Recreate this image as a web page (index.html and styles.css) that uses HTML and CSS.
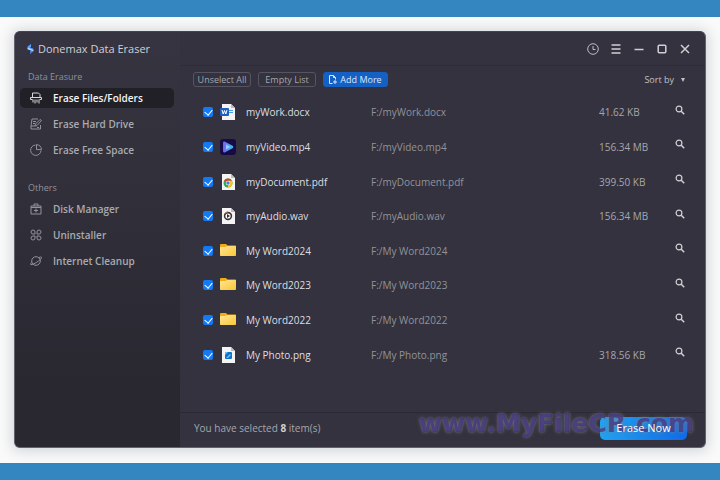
FILE: index.html
```html
<!DOCTYPE html>
<html lang="en">
<head>
<meta charset="utf-8">
<title>Donemax Data Eraser</title>
<link rel="stylesheet" href="styles.css">
</head>
<body>
<svg class="defs" aria-hidden="true">
  <defs>
    <linearGradient id="gold" x1="0" y1="0" x2="1" y2="1"><stop offset="0" stop-color="#ffe59a"/><stop offset="1" stop-color="#fbc630"/></linearGradient>
    <linearGradient id="play" x1="0" y1="0" x2="1" y2="0"><stop offset="0" stop-color="#7a5cf0"/><stop offset="1" stop-color="#35c3e8"/></linearGradient>
    <symbol id="folder" viewBox="0 0 16 16"><path fill="#f0ae12" d="M0 2.200C0 1.500.5 1 1.200 1H6l1.500 1.500H15c.6 0 1 .4 1 1V7H0z"/><path fill="url(#gold)" d="M0 4.800C0 4.300.3 4 .8 4H5.500L7 3h8c.6 0 1 .4 1 1v8c0 .6-.4 1-1 1H1c-.6 0-1-.4-1-1z"/></symbol>
    <symbol id="search" viewBox="0 0 10 10"><circle cx="4" cy="4" r="2.900" fill="none" stroke="currentColor" stroke-width="1.200"/><path d="M6.200 6.200 9.200 9.200" stroke="currentColor" stroke-width="1.500"/></symbol>
    <symbol id="page" viewBox="0 0 16 16"><path fill="#f4f4f4" d="M2 0h9l4 4v12H2z"/><path fill="#bcbcbc" d="M11 0l4 4h-4z"/></symbol>
  </defs>
</svg>
<div class="window">
  <aside class="sidebar">
    <h1 class="brand">
      <svg width="7" height="10" viewBox="0 0 7 10" aria-hidden="true"><path fill="#5a9dfb" d="M4 0 .6 2.600v2.600L4 6.500 3 7.500V10l3.400-2.800V4.800L3 3.500l1-.8z"/><path fill="#a9d3ff" d="M.6 3.500 6.400 6v1.200L.6 5.200z"/><path fill="#2f6df0" d="M3 7.800v2.200l3.400-2.800z"/></svg>
      Donemax Data Eraser
    </h1>
    <nav>
      <h2>Data Erasure</h2>
      <a class="item active" href="#files"><svg viewBox="0 0 12 12"><path d="M2.500 5V1h6l1.500 1.500V5M.5 7.500V5.500h11v2H9.500M.5 7.500h2M3 7.500v3M5 7.500v4M7 7.500v3M9 7.500v4"/></svg>Erase Files/Folders</a>
      <a class="item" href="#drive"><svg viewBox="0 0 12 12"><path d="M8 1H2L1 8v3h9.500V7M1 8h4M10 1.500l1.500 1L7 7.500l-2 .5.500-2zM3 3.500h3M3 5.500h2M7 9.500h2"/></svg>Erase Hard Drive</a>
      <a class="item" href="#space"><svg viewBox="0 0 12 12"><path d="M5.500 1A5.200 5.200 0 1 0 11 6.500M6.500 .6v5h5A5 5 0 0 0 6.500 .6z"/></svg>Erase Free Space</a>
      <h2 class="second">Others</h2>
      <a class="item" href="#disk"><svg viewBox="0 0 12 12"><path d="M1 3h10v8H1zM4 3V1h4v2M1 4.500h10M6 5.500v4M4 7.500h4"/></svg>Disk Manager</a>
      <a class="item" href="#uninstall"><svg viewBox="0 0 12 12"><path d="M5 5H3a2 2 0 1 1 2-2zM7 5V3a2 2 0 1 1 2 2zM5 9a2 2 0 1 1-2-2h2zM7 7h2a2 2 0 1 1-2 2z"/></svg>Uninstaller</a>
      <a class="item" href="#internet"><svg viewBox="0 0 12 12"><circle cx="6" cy="6" r="4.300"/><path d="M9 2.500c2-.8 3-.6 2.500.5C10.500 5.200 3.500 9.800 1 9.700.2 9.600.5 8.500 1.700 7.300"/></svg>Internet Cleanup</a>
    </nav>
  </aside>
  <main class="main">
    <header class="titlebar">
      <button type="button" aria-label="History"><svg viewBox="0 0 12 12"><circle cx="6" cy="6" r="5.300"/><path d="M6 3v3.500h2.500"/></svg></button>
      <button type="button" aria-label="Menu"><svg class="bold" viewBox="0 0 12 12"><path d="M1.500 2h9M1.500 6h9M1.500 10h9"/></svg></button>
      <button type="button" aria-label="Minimize"><svg class="bold" viewBox="0 0 12 12"><path d="M1.500 6.500h9"/></svg></button>
      <button type="button" aria-label="Maximize"><svg class="bold" viewBox="0 0 12 12"><rect x="2.200" y="2.200" width="7.600" height="7.600" rx="1"/></svg></button>
      <button type="button" aria-label="Close"><svg class="bold" viewBox="0 0 12 12"><path d="M2 2l8 8M10 2 2 10"/></svg></button>
    </header>
    <div class="toolbar">
      <button type="button">Unselect All</button>
      <button type="button">Empty List</button>
      <button type="button" class="add"><svg width="8" height="9" viewBox="0 0 8 9" aria-hidden="true"><path fill="none" stroke="currentColor" d="M3.500 8.500h-3v-8h4l2 2v2M4.500 .5v2h2M6 5v4M4 7h4"/></svg>Add More</button>
      <button type="button" class="sort">Sort by <span class="caret"></span></button>
    </div>
    <table class="files">
      <tbody>
        <tr><td class="check"><input type="checkbox" aria-label="myWork.docx" checked></td><td class="icon"><svg viewBox="0 0 16 16"><use href="#page"/><path stroke="#4a9be8" d="M9 6.500h4M9 8.500h4"/><rect y="4" width="9" height="8" rx="1" fill="#1f5fc0"/><path d="M2 6l1.200 4L4.500 6.500 5.800 10 7 6" fill="none" stroke="#fff"/></svg></td><td class="name">myWork.docx</td><td class="path">F:/myWork.docx</td><td class="size">41.62 KB</td><td class="find"><button type="button" aria-label="Locate"><svg><use href="#search"/></svg></button></td></tr>
        <tr><td class="check"><input type="checkbox" aria-label="myVideo.mp4" checked></td><td class="icon"><svg viewBox="0 0 16 16"><rect width="16" height="16" rx="3" fill="#160b46"/><path fill="url(#play)" d="M3 4c0-1.200 1-1.700 2-1.200l7.500 4c1 .6 1 1.800 0 2.400l-7.500 4c-1 .5-2 0-2-1.200z"/><path fill="#8fd0ff" d="M6 5.500 10.500 8 6 10.500z"/></svg></td><td class="name">myVideo.mp4</td><td class="path">F:/myVideo.mp4</td><td class="size">156.34 MB</td><td class="find"><button type="button" aria-label="Locate"><svg><use href="#search"/></svg></button></td></tr>
        <tr><td class="check"><input type="checkbox" aria-label="myDocument.pdf" checked></td><td class="icon"><svg viewBox="0 0 16 16"><use href="#page"/><circle cx="8" cy="9" r="4.500" fill="#2da94f"/><path fill="#e33b2e" d="M8 9 4.100 6.700A4.500 4.500 0 0 1 12 6.800H8z"/><path fill="#fcc31e" d="M8 9V6.800h4A4.500 4.500 0 0 1 8 13.500z"/><circle cx="8" cy="9" r="2.200" fill="#fff"/><circle cx="8" cy="9" r="1.700" fill="#3f7fe8"/></svg></td><td class="name">myDocument.pdf</td><td class="path">F:/myDocument.pdf</td><td class="size">399.50 KB</td><td class="find"><button type="button" aria-label="Locate"><svg><use href="#search"/></svg></button></td></tr>
        <tr><td class="check"><input type="checkbox" aria-label="myAudio.wav" checked></td><td class="icon"><svg viewBox="0 0 16 16"><use href="#page"/><circle cx="8" cy="8" r="3.400" fill="#fff" stroke="#40343a" stroke-width="1.600"/><path stroke="#e07a32" fill="none" d="M4.400 6A4.200 4.200 0 0 1 8 3.800"/><path fill="#333" d="M7 6l3 2-3 2z"/></svg></td><td class="name">myAudio.wav</td><td class="path">F:/myAudio.wav</td><td class="size">156.34 MB</td><td class="find"><button type="button" aria-label="Locate"><svg><use href="#search"/></svg></button></td></tr>
        <tr><td class="check"><input type="checkbox" aria-label="My Word2024" checked></td><td class="icon"><svg><use href="#folder"/></svg></td><td class="name">My Word2024</td><td class="path">F:/My Word2024</td><td class="size"></td><td class="find"><button type="button" aria-label="Locate"><svg><use href="#search"/></svg></button></td></tr>
        <tr><td class="check"><input type="checkbox" aria-label="My Word2023" checked></td><td class="icon"><svg><use href="#folder"/></svg></td><td class="name">My Word2023</td><td class="path">F:/My Word2023</td><td class="size"></td><td class="find"><button type="button" aria-label="Locate"><svg><use href="#search"/></svg></button></td></tr>
        <tr><td class="check"><input type="checkbox" aria-label="My Word2022" checked></td><td class="icon"><svg><use href="#folder"/></svg></td><td class="name">My Word2022</td><td class="path">F:/My Word2022</td><td class="size"></td><td class="find"><button type="button" aria-label="Locate"><svg><use href="#search"/></svg></button></td></tr>
        <tr><td class="check"><input type="checkbox" aria-label="My Photo.png" checked></td><td class="icon"><svg viewBox="0 0 16 16"><use href="#page"/><rect x="5" y="5" width="7" height="7" rx="1" fill="#1570c8"/><path fill="#59c8f5" d="M6 11l4-4 1 1-3 3zM5 5h3L5 8z"/></svg></td><td class="name">My Photo.png</td><td class="path">F:/My Photo.png</td><td class="size">318.56 KB</td><td class="find"><button type="button" aria-label="Locate"><svg><use href="#search"/></svg></button></td></tr>
      </tbody>
    </table>
    <footer class="footer">
      <p>You have selected <b>8</b> item(s)</p>
      <button type="button" class="erase"><span>Erase Now</span></button>
      <div class="watermark">www.MyFileCR.com</div>
    </footer>
  </main>
</div>
</body>
</html>
```
FILE: styles.css
```css
* { box-sizing: border-box; }

body {
  margin: 0;
  min-height: 100vh;
  display: flex;
  padding: 14px 14px 15px;
  border: solid #3486c0;
  border-width: 17px 0;
  background: #fafafa;
  font: 11px/16px "Open Sans", "Noto Sans", sans-serif;
  color: #a6a6ad;
}

.defs { position: absolute; width: 0; height: 0; }

button { font: inherit; color: inherit; background: none; border: 0; padding: 0; }

.window {
  flex: 1;
  display: flex;
  border: 1px solid #62616c;
  border-top-color: #44434e;
  border-radius: 6px;
  background: #33323e;
  box-shadow: 0 1px 14px 2px #ced3d8;
}

.sidebar {
  flex: 0 0 165px;
  border-radius: 5px 0 0 5px;
  background: linear-gradient(#353440, #2f2e38 50%, #292831 85%);
}

.brand {
  display: flex;
  align-items: center;
  gap: 4px;
  margin: 0;
  padding: 9px 0 0 12px;
  font-size: 11px;
  font-weight: 400;
  color: #d0d0d4;
  white-space: nowrap;
}

nav { padding: 12px 6px 0 5px; }

nav h2 {
  margin: 0 0 3px 8px;
  font-size: 9px;
  line-height: 16px;
  font-weight: 400;
  color: #92929a;
}

nav h2.second { margin-top: 20px; }

.item {
  display: flex;
  align-items: center;
  gap: 11px;
  height: 20px;
  margin-bottom: 6px;
  padding-left: 10px;
  border-radius: 5px;
  font-size: 10px;
  font-weight: 600;
  color: #aaaab0;
  text-decoration: none;
}

.item svg {
  width: 12px;
  height: 12px;
  fill: none;
  stroke: #92929a;
}

.item.active { background: #212027; color: #f4f4f6; }
.item.active svg { stroke: #d8d8dc; }

.main { flex: 1; display: flex; flex-direction: column; min-width: 0; }

.titlebar {
  display: flex;
  justify-content: flex-end;
  gap: 11px;
  height: 34px;
  padding: 0 14px;
  border-bottom: 1px solid #2d2c37;
}

.titlebar svg {
  display: block;
  width: 12px;
  height: 12px;
  fill: none;
  stroke: #bcbcc2;
}

.titlebar svg.bold { stroke-width: 1.500; stroke: #d0d0d4; }

.toolbar {
  display: flex;
  align-items: center;
  gap: 7px;
  padding: 6px 20px 0 13px;
  font-size: 9px;
}

.toolbar button {
  height: 15px;
  width: 58px;
  border: 1px solid #555460;
  border-radius: 3px;
  line-height: 13px;
  white-space: nowrap;
}

.toolbar .add {
  display: flex;
  align-items: center;
  justify-content: center;
  gap: 3px;
  width: 65px;
  border-color: #1560c5;
  background: #1560c5;
  color: #d8e8ff;
}

.toolbar .sort {
  display: flex;
  align-items: center;
  justify-content: flex-end;
  gap: 7px;
  margin-left: auto;
  border: 0;
  color: #c0c0c6;
}

.caret { border: solid transparent; border-width: 4px 2px 0; border-top-color: #c0c0c6; }

.files {
  width: 100%;
  height: 277px;
  margin-top: 8px;
  table-layout: fixed;
  border-collapse: collapse;
  font-size: 10px;
}

.files td { padding: 0; vertical-align: middle; }
.files svg { display: block; width: 16px; height: 16px; }
.files .check { width: 40px; padding-left: 23px; }
.files .icon { width: 26px; }
.files .name { width: 125px; color: #dedee2; }
.files .path { color: #92929a; }
.files .size { width: 76px; }
.files .find { width: 30px; padding-bottom: 3px; }
.files .find svg { width: 10px; height: 10px; color: #d0d0d4; }

.files input {
  display: block;
  appearance: none;
  width: 10px;
  height: 10px;
  margin: 0;
  border-radius: 2px;
  background: #1479f5;
}

.files input::after {
  content: "";
  display: block;
  width: 4px;
  height: 6px;
  margin: 0 3px;
  border: solid #fff;
  border-width: 0 1px 1px 0;
  transform: translateY(1px) rotate(40deg);
}

.footer {
  position: relative;
  display: flex;
  align-items: center;
  justify-content: space-between;
  height: 35px;
  margin-top: auto;
  padding: 0 18px 4px 14px;
  border-top: 1px solid #2b2a34;
  font-size: 10px;
}

.footer p { margin: 0; }
.footer b { color: #d0d0d4; }

.erase {
  width: 87px;
  height: 23px;
  border-radius: 5px;
  background: linear-gradient(100deg, #22a4f2, #116ae6);
  color: #fff;
  font-size: 11px;
}

.erase span { position: relative; z-index: 2; }

.watermark {
  position: absolute;
  right: 11px;
  top: -5px;
  font: bold 25px/32px "DejaVu Sans", sans-serif;
  color: rgba(52, 38, 130, 0.65);
  text-shadow: 0 0 2px rgba(130, 130, 135, 0.6), 0 0 4px rgba(130, 130, 135, 0.6);
  pointer-events: none;
}
```
